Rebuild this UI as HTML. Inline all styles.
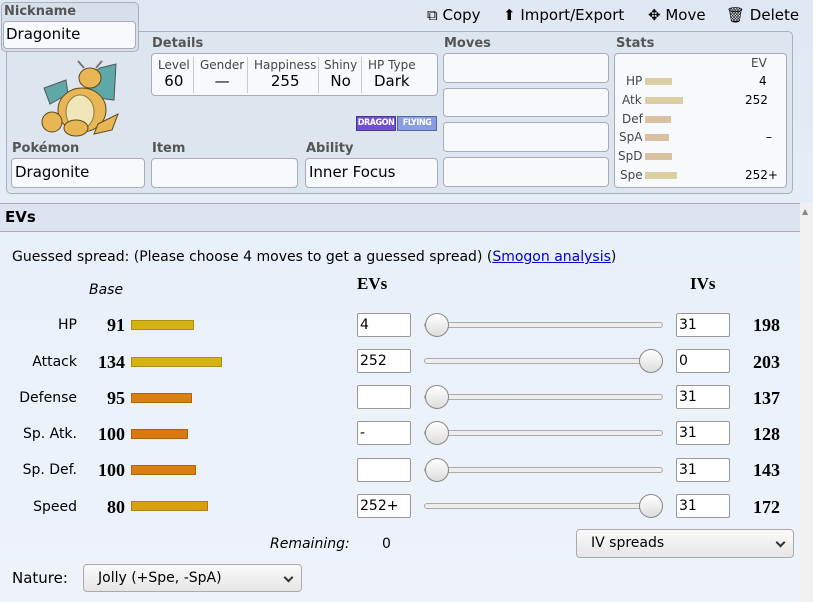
<!DOCTYPE html>
<html><head><meta charset="utf-8"><style>
*{box-sizing:border-box;margin:0;padding:0}
body{width:813px;height:602px;overflow:hidden;position:relative;font-family:"DejaVu Sans",Verdana,sans-serif;background:linear-gradient(180deg,#dfe8f2 0%,#e6eef7 40%,#eef3f9 100%);color:#000}
.a{position:absolute}
.lbl{position:absolute;font-weight:bold;font-size:13px;color:#555}
.inp{position:absolute;background:#f7fafd;border:1px solid #aab;border-radius:4px;font-size:14px;padding:4px 3px}
.ev{position:absolute;background:#fff;border:1px solid #999;border-radius:2px;font-size:14px;padding:3px 2px;height:24px;width:54px}
.track{position:absolute;height:6px;border:1px solid #aaa;border-radius:3px;background:#eee;left:424px;width:239px}
.thumb{position:absolute;width:24px;height:24px;border-radius:50%;border:1px solid #888;background:linear-gradient(#fff,#ddd)}
.rl{position:absolute;width:77px;text-align:right;font-size:14px;left:0}
.bn{position:absolute;left:80px;width:45px;text-align:right;font-family:"Liberation Serif",serif;font-weight:bold;font-size:18px}
.bar{position:absolute;left:131px;height:10px;border:1px solid rgba(0,0,0,.2)}
.tot{position:absolute;left:735px;width:45px;text-align:right;font-family:"Liberation Serif",serif;font-weight:bold;font-size:18px}
.sel{position:absolute;border:1px solid #aaa;border-radius:4px;background:linear-gradient(#fafafa,#e6e6e6);font-size:14px;padding:5px 14px}
.chev{position:absolute;right:9px;top:9px;width:7px;height:7px;border-right:2px solid #333;border-bottom:2px solid #333;transform:rotate(45deg)}
.st{position:absolute;font-size:12px;color:#444}
</style></head><body>
<div class="a" style="left:427px;top:6px;font-size:15px;">⧉ Copy</div>
<div class="a" style="left:503px;top:6px;font-size:15px;">⬆ Import/Export</div>
<div class="a" style="left:648px;top:6px;font-size:15px;">✥ Move</div>
<div class="a" style="left:726px;top:6px;font-size:15px;">🗑 Delete</div>

<div class="a" style="left:6px;top:31px;width:787px;height:163px;border:1px solid #a9b1bb;border-radius:5px;background:#dde5ef"></div>
<div class="a" style="left:1px;top:2px;width:138px;height:50px;border:1px solid #a9b1bb;border-radius:5px;background:#d7dfea"></div>
<div class="lbl" style="left:4px;top:4px;">Nickname</div>
<div class="inp" style="left:3px;top:21px;width:133px;height:28px;padding:3px 2px;font-size:15px">Dragonite</div>

<div class="lbl" style="left:152px;top:36px;">Details</div>
<div class="a" style="left:151px;top:53px;width:287px;height:43px;border:1px solid #aab;border-radius:4px;background:#f7fafd;font-size:12px;color:#444">
 <div class="a" style="left:6px;top:4px;text-align:center">Level<br><span style="font-size:15px;color:#000">60</span></div>
 <div class="a" style="left:41px;top:3px;height:36px;border-left:1px solid #ccc"></div>
 <div class="a" style="left:48px;top:4px;text-align:center">Gender<br><span style="font-size:15px;color:#000">—</span></div>
 <div class="a" style="left:95px;top:3px;height:36px;border-left:1px solid #ccc"></div>
 <div class="a" style="left:102px;top:4px;text-align:center">Happiness<br><span style="font-size:15px;color:#000">255</span></div>
 <div class="a" style="left:166px;top:3px;height:36px;border-left:1px solid #ccc"></div>
 <div class="a" style="left:172px;top:4px;text-align:center">Shiny<br><span style="font-size:15px;color:#000">No</span></div>
 <div class="a" style="left:209px;top:3px;height:36px;border-left:1px solid #ccc"></div>
 <div class="a" style="left:216px;top:4px;">HP Type<br><span style="font-size:15px;color:#000;padding-left:6px">Dark</span></div>
</div>
<svg class="a" style="left:36px;top:56px" width="86" height="82" viewBox="0 0 86 82">
 <path d="M44 26 L64 12 L80 8 L78 44 L62 42Z" fill="#5fa8a8" stroke="#555"/>
 <path d="M30 24 L8 32 L14 48 L32 38Z" fill="#5fa8a8" stroke="#555"/>
 <ellipse cx="46" cy="54" rx="24" ry="22" fill="#e8b654" stroke="#5a4a20"/>
 <ellipse cx="44" cy="56" rx="14" ry="17" fill="#f0e6b8" stroke="#8a7a40"/>
 <ellipse cx="54" cy="22" rx="11" ry="10" fill="#e8b654" stroke="#5a4a20"/>
 <ellipse cx="16" cy="66" rx="10" ry="10" fill="#e8b654" stroke="#5a4a20"/>
 <ellipse cx="40" cy="72" rx="12" ry="8" fill="#e8b654" stroke="#5a4a20"/>
 <path d="M62 68 L82 58 L76 74 L58 78Z" fill="#e8b654" stroke="#5a4a20"/>
 <path d="M48 12 L42 5 M60 12 L66 5" stroke="#777" stroke-width="2"/>
</svg>
<div class="a" style="left:356px;top:116px;width:40px;height:15px;background:#7050d0;border:1px solid #4a3890;color:#fff;font:bold 9px 'DejaVu Sans Condensed','DejaVu Sans',sans-serif;letter-spacing:-0.5px;text-align:center;line-height:13px;overflow:hidden">DRAGON</div>
<div class="a" style="left:397px;top:116px;width:40px;height:15px;background:#8c9ce0;border:1px solid #5a68a8;color:#fff;font:bold 9px 'DejaVu Sans Condensed','DejaVu Sans',sans-serif;letter-spacing:-0.5px;text-align:center;line-height:13px;overflow:hidden">FLYING</div>

<div class="lbl" style="left:12px;top:141px;">Pokémon</div>
<div class="inp" style="left:11px;top:158px;width:134px;height:30px;font-size:15px">Dragonite</div>
<div class="lbl" style="left:152px;top:141px;">Item</div>
<div class="inp" style="left:151px;top:158px;width:147px;height:30px"></div>
<div class="lbl" style="left:306px;top:141px;">Ability</div>
<div class="inp" style="left:305px;top:158px;width:133px;height:30px;font-size:15px">Inner Focus</div>

<div class="lbl" style="left:444px;top:36px;">Moves</div>
<div class="inp" style="left:443px;top:53px;width:166px;height:30px"></div>
<div class="inp" style="left:443px;top:88px;width:166px;height:29px"></div>
<div class="inp" style="left:443px;top:122px;width:166px;height:30px"></div>
<div class="inp" style="left:443px;top:157px;width:166px;height:30px"></div>

<div class="lbl" style="left:616px;top:36px;">Stats</div>
<div class="inp" style="left:614px;top:53px;width:173px;height:135px"></div>
<div class="st" style="left:751px;top:56px">EV</div>
<div class="st" style="left:626px;top:74px">HP</div><div class="a" style="left:645px;top:78px;width:27px;height:7px;background:#d9cfa2"></div><div class="st" style="left:759px;top:74px;color:#000">4</div>
<div class="st" style="left:622px;top:93px">Atk</div><div class="a" style="left:645px;top:97px;width:38px;height:7px;background:#d9cfa2"></div><div class="st" style="left:745px;top:93px;color:#000">252</div>
<div class="st" style="left:622px;top:112px">Def</div><div class="a" style="left:645px;top:116px;width:26px;height:7px;background:#d9c1a2"></div>
<div class="st" style="left:619px;top:130px">SpA</div><div class="a" style="left:645px;top:134px;width:24px;height:7px;background:#d9c1a2"></div><div class="st" style="left:766px;top:130px;color:#000">–</div>
<div class="st" style="left:618px;top:149px">SpD</div><div class="a" style="left:645px;top:153px;width:27px;height:7px;background:#d9c1a2"></div>
<div class="st" style="left:620px;top:168px">Spe</div><div class="a" style="left:645px;top:172px;width:32px;height:7px;background:#d9cfa2"></div><div class="st" style="left:745px;top:168px;color:#000">252+</div>

<div class="a" style="left:0;top:203px;width:800px;height:29px;background:#dce5ef;border-top:1px solid #aab;border-bottom:1px solid #aab"></div>
<div class="a" style="left:5px;top:208px;font-weight:bold;font-size:15px">EVs</div>
<div class="a" style="left:800px;top:203px;width:13px;height:399px;background:#f0f0f0"></div>
<div class="a" style="left:802px;top:207px;font-size:8px;color:#888">▲</div>
<div class="a" style="left:0;top:232px;width:800px;height:370px;background:linear-gradient(180deg,#e8f0f9,#eef3fa)"></div>

<div class="a" style="left:12px;top:249px;font-size:14px">Guessed spread: (Please choose 4 moves to get a guessed spread) (<span style="color:#00c;text-decoration:underline">Smogon analysis</span>)</div>
<div class="a" style="left:89px;top:282px;font-size:14px;font-style:italic">Base</div>
<div class="a" style="left:357px;top:274px;font-family:'Liberation Serif',serif;font-weight:bold;font-size:17px">EVs</div>
<div class="a" style="left:690px;top:274px;font-family:'Liberation Serif',serif;font-weight:bold;font-size:17px">IVs</div>

<div class="rl" style="top:317px">HP</div><div class="bn" style="top:315px">91</div><div class="bar" style="top:320px;width:63px;background:#d4b414"></div>
<div class="ev" style="left:357px;top:313px">4</div><div class="track" style="top:322px"></div><div class="thumb" style="left:425px;top:313px"></div>
<div class="ev" style="left:676px;top:313px">31</div><div class="tot" style="top:315px">198</div>

<div class="rl" style="top:354px">Attack</div><div class="bn" style="top:352px">134</div><div class="bar" style="top:357px;width:91px;background:#d4b414"></div>
<div class="ev" style="left:357px;top:349px">252</div><div class="track" style="top:358px"></div><div class="thumb" style="left:639px;top:349px"></div>
<div class="ev" style="left:676px;top:349px">0</div><div class="tot" style="top:352px">203</div>

<div class="rl" style="top:390px">Defense</div><div class="bn" style="top:388px">95</div><div class="bar" style="top:393px;width:61px;background:#d98010"></div>
<div class="ev" style="left:357px;top:385px"></div><div class="track" style="top:394px"></div><div class="thumb" style="left:425px;top:385px"></div>
<div class="ev" style="left:676px;top:385px">31</div><div class="tot" style="top:388px">137</div>

<div class="rl" style="top:426px">Sp. Atk.</div><div class="bn" style="top:424px">100</div><div class="bar" style="top:429px;width:57px;background:#d97810"></div>
<div class="ev" style="left:357px;top:421px">-</div><div class="track" style="top:430px"></div><div class="thumb" style="left:425px;top:421px"></div>
<div class="ev" style="left:676px;top:421px">31</div><div class="tot" style="top:424px">128</div>

<div class="rl" style="top:462px">Sp. Def.</div><div class="bn" style="top:460px">100</div><div class="bar" style="top:465px;width:65px;background:#d98010"></div>
<div class="ev" style="left:357px;top:458px"></div><div class="track" style="top:467px"></div><div class="thumb" style="left:425px;top:458px"></div>
<div class="ev" style="left:676px;top:458px">31</div><div class="tot" style="top:460px">143</div>

<div class="rl" style="top:499px">Speed</div><div class="bn" style="top:497px">80</div><div class="bar" style="top:501px;width:77px;background:#d8a010"></div>
<div class="ev" style="left:357px;top:494px">252+</div><div class="track" style="top:503px"></div><div class="thumb" style="left:639px;top:494px"></div>
<div class="ev" style="left:676px;top:494px">31</div><div class="tot" style="top:497px">172</div>

<div class="a" style="left:270px;top:536px;font-size:14px;font-style:italic">Remaining:</div>
<div class="a" style="left:382px;top:536px;font-size:14px">0</div>
<div class="sel" style="left:576px;top:529px;width:218px;height:29px">IV spreads<span class="chev"></span></div>
<div class="a" style="left:12px;top:569px;font-size:15px">Nature:</div>
<div class="sel" style="left:83px;top:564px;width:219px;height:28px">Jolly (+Spe, -SpA)<span class="chev"></span></div>
</body></html>
